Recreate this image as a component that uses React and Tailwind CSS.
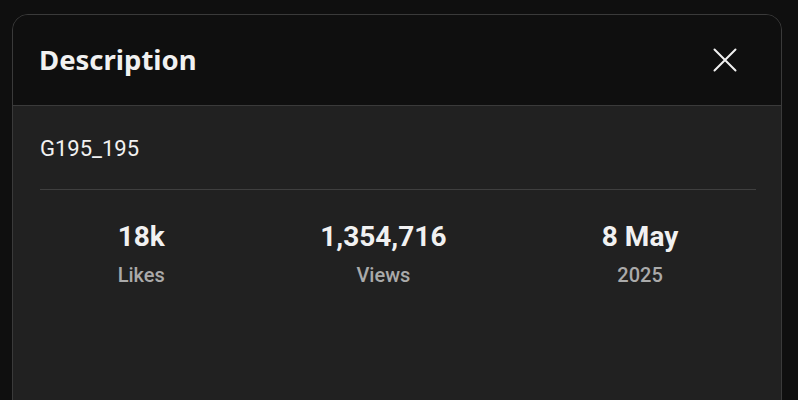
export default function App() {
  const stats = [
    { value: "18k", label: "Likes" },
    { value: "1,354,716", label: "Views" },
    { value: "8 May", label: "2025" },
  ];
  return (
    <div className="w-[798px] h-[400px] overflow-hidden bg-[#0f0f0f] pl-[12px] pt-[14px]" style={{ fontFamily: "Roboto, sans-serif" }}>
      <div className="w-[770px] h-[420px] rounded-t-[16px] border border-[#3a3a3a] bg-[#212121] overflow-hidden flex flex-col">
        <div className="h-[91px] shrink-0 bg-[#0f0f0f] border-b border-[#3a3a3a] flex items-center justify-between pl-[26px] pr-[44px]">
          <h2 className="text-[27.5px] font-bold text-[#f1f1f1] leading-none" style={{ fontFamily: '"Noto Sans", sans-serif' }}>
            Description
          </h2>
          <button className="w-[24px] h-[24px] flex items-center justify-center text-[#f1f1f1]">
            <svg width="24" height="24" viewBox="0 0 24 24" fill="none" stroke="currentColor" strokeWidth="2" strokeLinecap="round">
              <path d="M1.5 1.5 L22.5 22.5 M22.5 1.5 L1.5 22.5" />
            </svg>
          </button>
        </div>
        <div className="pl-[27px] pr-[25px] pt-[27px]">
          <p className="text-[22px] leading-[32px] text-[#f1f1f1]">G195_195</p>
          <div className="mt-[24px] h-px bg-[#3f3f3f]" />
          <div className="mt-[29px] flex justify-around">
            {stats.map((s) => (
              <div key={s.label} className="flex flex-col items-center">
                <span className="text-[28px] leading-[36px] font-bold text-[#f1f1f1]">{s.value}</span>
                <span className="mt-[6px] text-[20px] leading-[28px] font-medium text-[#aaaaaa]">{s.label}</span>
              </div>
            ))}
          </div>
        </div>
      </div>
    </div>
  );
}
